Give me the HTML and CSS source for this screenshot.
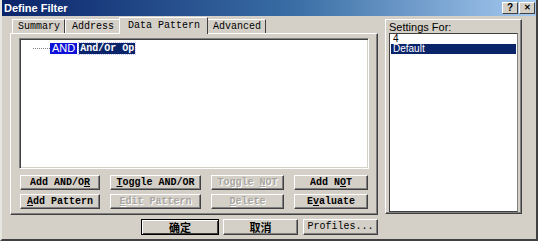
FILE: index.html
```html
<!DOCTYPE html>
<html>
<head lang="en">
    <meta charset="UTF-8">
    <title>Define Filter</title>
    <link rel="stylesheet" href="styles.css">
</head>
<body>
<div class="window">
    <div class="titleBar">
        <span class="title">Define Filter</span>
        <span class="capBtns">
            <span class="capBtn">?</span><span class="capBtn close">&#10005;</span>
        </span>
    </div>
    <div class="main">
        <div class="leftCol">
            <ul class="tabs">
                <li class="tab">Summary</li>
                <li class="tab">Address</li>
                <li class="tab active">Data Pattern</li>
                <li class="tab">Advanced</li>
            </ul>
            <div class="panel">
                <div class="tree">
                    <div class="node">
                        <span class="dots"></span>
                        <span class="andBox">AND</span>
                        <span class="opBox">And/Or Op</span>
                    </div>
                </div>
                <div class="btnGrid">
                    <button class="btn">Add AND/O<u>R</u></button>
                    <button class="btn"><u>T</u>oggle AND/OR</button>
                    <button class="btn" disabled>Toggle <u>N</u>OT</button>
                    <button class="btn">Add N<u>O</u>T</button>
                    <button class="btn"><u>A</u>dd Pattern</button>
                    <button class="btn" disabled><u>E</u>dit Pattern</button>
                    <button class="btn" disabled><u>D</u>elete</button>
                    <button class="btn">E<u>v</u>aluate</button>
                </div>
            </div>
            <div class="footer">
                <button class="btn cjk default">确定</button>
                <button class="btn cjk">取消</button>
                <button class="btn profiles">Profiles...</button>
            </div>
        </div>
        <div class="group">
            <div class="groupLabel">Settings For:</div>
            <ul class="listBox">
                <li class="listItem">4</li>
                <li class="listItem selected">Default</li>
            </ul>
        </div>
    </div>
</div>
</body>
</html>
```

FILE: styles.css
```css
*{
    padding: 0;
    margin: 0;
    box-sizing: border-box;
}
body{
    background-color: #d4d0c8;
}
.window{
    width: 538px;
    height: 241px;
    background-color: #d4d0c8;
    border-left: 2px solid #e8e6e0;
    border-right: 2px solid #404040;
    border-bottom: 2px solid #404040;
    overflow: hidden;
}
.titleBar{
    height: 16px;
    display: flex;
    align-items: center;
    justify-content: space-between;
    padding: 0 1px 0 2px;
    background: linear-gradient(to right, #0a246a 0%, #3a6ea5 55%, #a6caf0 100%);
}
.title{
    font: bold 11px "Liberation Sans", sans-serif;
    color: #fff;
}
.capBtns{
    display: flex;
}
.capBtn{
    width: 16px;
    height: 12px;
    background-color: #d4d0c8;
    border: 1px solid;
    border-color: #fff #404040 #404040 #fff;
    font: bold 10px/10px "Liberation Sans", sans-serif;
    text-align: center;
    color: #000;
}
.capBtn.close{
    margin-left: 1px;
    font-size: 8px;
}
.main{
    display: flex;
    padding-left: 8px;
}
.leftCol{
    width: 368px;
    padding-top: 1px;
}
.tabs{
    list-style: none;
    display: flex;
    align-items: flex-end;
    height: 16px;
    padding-left: 2px;
}
.tab{
    height: 14px;
    padding: 0 4px 0 5px;
    font: 10px/13px "Liberation Mono", monospace;
    color: #000;
    border-top: 1px solid #fff;
    border-left: 1px solid #fff;
    border-right: 1px solid #404040;
}
.tab:nth-child(2){
    padding: 0 5px 0 6px;
}
.tab:last-child{
    padding: 0 4px 0 5px;
}
.tab.active{
    padding: 0 7px 0 8px;
    margin: 0 -1px -1px;
    line-height: 15px;
    background-color: #d4d0c8;
    position: relative;
    z-index: 1;
    height: 17px;
}
.panel{
    height: 182px;
    border: 1px solid;
    border-color: #fff #404040 #404040 #fff;
    box-shadow: inset -1px -1px 0 #808080;
    padding: 4px 0 0 8px;
}
.tree{
    width: 350px;
    height: 131px;
    background-color: #fff;
    border: 1px solid;
    border-color: #808080 #fff #fff #808080;
    box-shadow: inset 1px 1px 0 #404040, inset -1px -1px 0 #d4d0c8;
    padding: 3px 0 0 13px;
}
.node{
    display: flex;
    align-items: center;
    height: 12px;
}
.dots{
    width: 17px;
    border-top: 1px dotted #808080;
}
.andBox{
    height: 11px;
    padding: 0 2px;
    background-color: #0c10d8;
    color: #fff;
    font: 11px/11px "Liberation Sans", sans-serif;
}
.opBox{
    height: 11px;
    margin-left: 2px;
    padding: 0 1px;
    background-color: #0a246a;
    color: #fff;
    outline: 1px dotted #c0c0ff;
    font: bold 10px/11px "Liberation Mono", monospace;
}
.btnGrid{
    display: grid;
    grid-template-columns: 80px 91px 73px 74px;
    grid-auto-rows: 15px;
    column-gap: 10px;
    row-gap: 4px;
    margin: 6px 0 0 1px;
}
.btn{
    background-color: #d4d0c8;
    border: 1px solid;
    border-color: #fff #404040 #404040 #fff;
    box-shadow: inset -1px -1px 0 #808080;
    font: bold 10px/12px "Liberation Mono", monospace;
    color: #000;
    text-align: center;
}
.btn:disabled{
    color: #a8a6a0;
    text-shadow: 1px 1px 0 #fff;
}
.footer{
    display: flex;
    justify-content: flex-end;
    gap: 3px;
    margin-top: 4px;
}
.footer .btn{
    width: 75px;
    height: 16px;
}
.btn.cjk{
    font: bold 11px/12px "Noto Sans CJK SC", sans-serif;
}
.btn.default{
    width: 78px;
    border: 1px solid #000;
    box-shadow: inset 1px 1px 0 #fff, inset -1px -1px 0 #404040;
    margin-right: 1px;
}
.btn.profiles{
    margin-left: 2px;
    font-weight: normal;
}
.group{
    width: 137px;
    height: 195px;
    margin: 3px 0 0 7px;
    border: 1px solid;
    border-color: #fff #404040 #404040 #fff;
    box-shadow: inset -1px -1px 0 #808080;
    padding: 2px 0 0 3px;
}
.groupLabel{
    font: 11px/11px "Liberation Sans", sans-serif;
    color: #000;
    height: 11px;
}
.listBox{
    list-style: none;
    width: 129px;
    height: 179px;
    background-color: #fff;
    border: 1px solid;
    border-color: #404040 #808080 #404040 #404040;
    padding: 0 1px;
}
.listItem{
    height: 10px;
    padding-left: 2px;
    font: 10px/10px "Liberation Sans", sans-serif;
    color: #000;
}
.listItem.selected{
    background-color: #0a246a;
    color: #fff;
}
```
